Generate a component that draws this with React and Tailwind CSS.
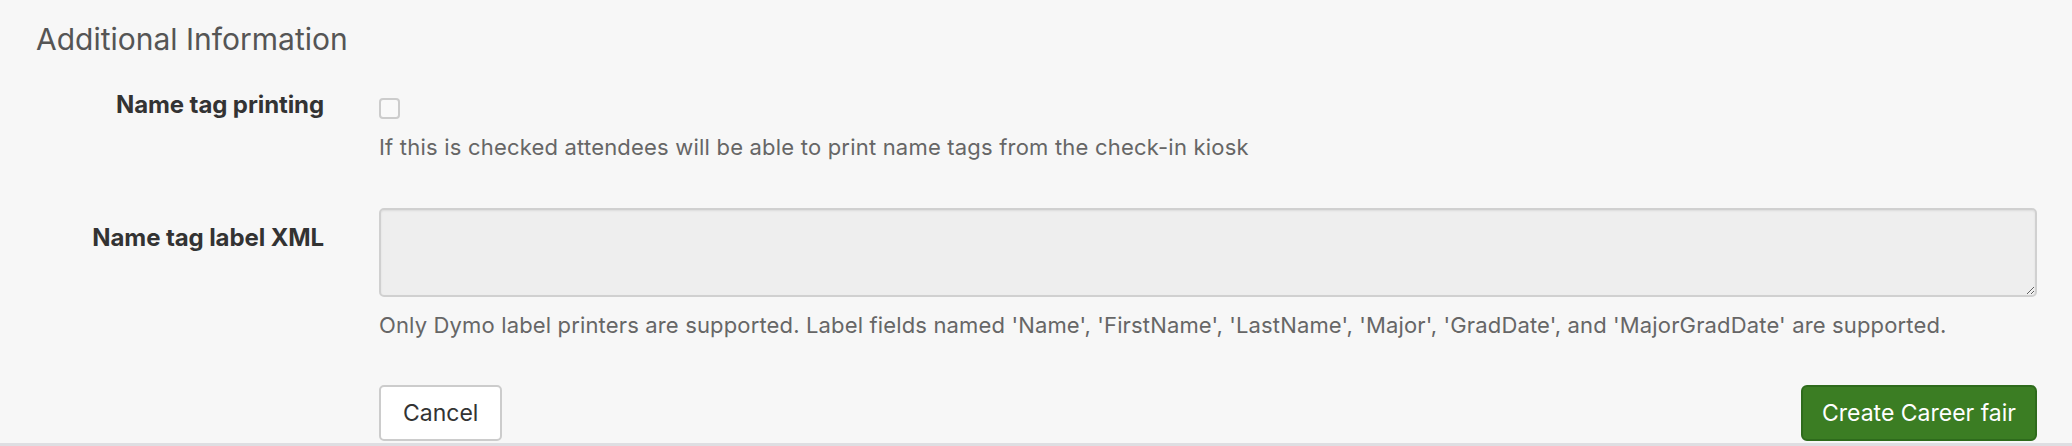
import React from "react";

export default function App() {
  return (
    <div className="w-[2072px] h-[446px] overflow-hidden bg-[#f7f7f7] border-b-[3px] border-[#dedee2] font-['Inter','Liberation_Sans',sans-serif]">
      <div className="pl-[36px] pr-[35px] pt-[21px]">
        <h3 className="text-[30px] leading-[36px] font-normal text-[#555555]">
          Additional Information
        </h3>

        <div className="mt-[33px] grid grid-cols-[288px_1fr] gap-x-[55px]">
          <label className="text-right text-[24px] leading-[30px] font-bold text-[#333333] tracking-[-0.1px]">
            Name tag printing
          </label>
          <div>
            <input
              type="checkbox"
              className="mt-[8px] block w-[21px] h-[21px] appearance-none rounded-[4px] border-2 border-[#cccccc] bg-[#f9f9f9]"
            />
            <p className="mt-[14px] text-[22px] leading-[28px] tracking-[0.2px] text-[#666666]">
              If this is checked attendees will be able to print name tags from the check-in kiosk
            </p>
          </div>
        </div>

        <div className="mt-[47px] grid grid-cols-[288px_1fr] gap-x-[55px]">
          <label className="mt-[15px] text-right text-[24px] leading-[30px] font-bold text-[#333333] tracking-[-0.1px]">
            Name tag label XML
          </label>
          <div>
            <textarea
              disabled
              className="block w-full h-[89px] rounded-[5px] border-2 border-[#d0d0d0] bg-[#eeeeee] shadow-[inset_0_1px_2px_rgba(0,0,0,0.08)] resize-y"
            />
            <p className="mt-[14px] text-[22px] leading-[28px] tracking-[0.15px] text-[#666666]">
              Only Dymo label printers are supported. Label fields named 'Name', 'FirstName', 'LastName', 'Major', 'GradDate', and 'MajorGradDate' are supported.
            </p>
            <div className="mt-[46px] flex justify-between">
              <button className="h-[56px] px-[22px] rounded-[5px] border-2 border-[#cccccc] bg-white text-[23px] text-[#333333]">
                Cancel
              </button>
              <button className="h-[56px] px-[19px] rounded-[6px] border-2 border-[#2e6b1c] bg-[#3b7d23] text-[23px] text-white">
                Create Career fair
              </button>
            </div>
          </div>
        </div>
      </div>
    </div>
  );
}
